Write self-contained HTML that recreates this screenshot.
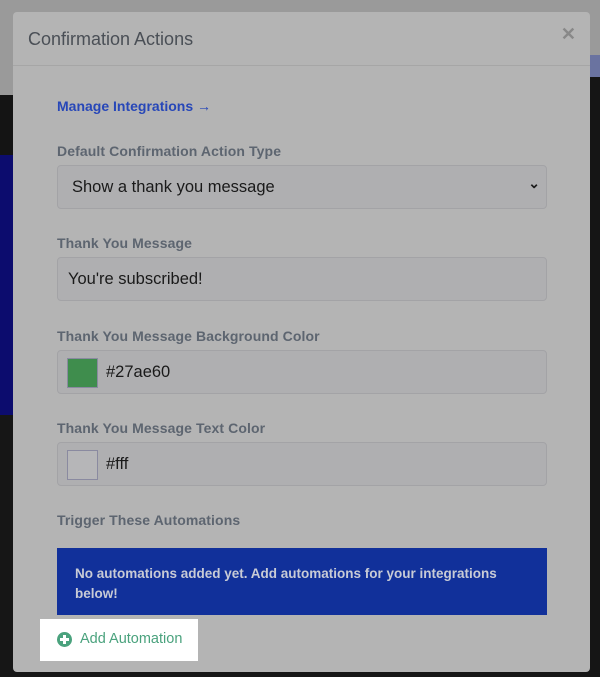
<!DOCTYPE html>
<html><head><style>
body{margin:0;width:600px;height:664px;overflow:hidden;position:relative;font-family:"Liberation Sans",sans-serif;background:#161616}
.bg{position:absolute}
.m{position:absolute;left:13px;top:12px;width:577px;height:660px;background:#b4b4b4;border-radius:4px}
.hd{position:absolute;left:0;top:0;right:0;height:53px;border-bottom:1px solid #a6a6a6}
.t{position:absolute;left:15px;top:17px;font-size:18px;color:#4a4f56}
.x{position:absolute;right:14px;top:12px;font-size:18px;color:#888;font-weight:bold}
.lbl{position:absolute;left:44px;font-size:14px;color:#5d6570;font-weight:bold;letter-spacing:0.1px}
.in{position:absolute;left:44px;width:490px;height:44px;background:#afafb1;border:1px solid #a3a3a6;border-radius:4px;box-sizing:border-box;font-size:16.5px;color:#1a1a1a}
.in span{position:absolute;top:12px}
.sw{position:absolute;left:9px;top:7px;width:31px;height:30px;box-sizing:border-box;border:1px solid #8a8aa0}
</style></head><body>
<div class="bg" style="left:0;top:0;width:600px;height:95px;background:#9a9a9a"></div>
<div class="bg" style="left:0;top:95px;width:14px;height:60px;background:#141414"></div>
<div class="bg" style="left:0;top:155px;width:14px;height:260px;background:#0c0c6e"></div>
<div class="bg" style="left:580px;top:55px;width:20px;height:22px;background:#6a73a0"></div>
<div class="bg" style="left:580px;top:77px;width:20px;height:600px;background:#151515"></div>
<div class="m">
<div class="hd"><div class="t">Confirmation Actions</div><div class="x">✕</div></div>
<div style="position:absolute;left:44px;top:86px;font-size:14px;color:#2747b8;font-weight:bold">Manage Integrations →</div>
<div class="lbl" style="top:131px">Default Confirmation Action Type</div>
<div class="in" style="top:153px"><span style="left:14px">Show a thank you message</span><span style="right:6px;top:9px;font-size:14px;font-weight:bold">⌄</span></div>
<div class="lbl" style="top:223px">Thank You Message</div>
<div class="in" style="top:245px"><span style="left:10px">You're subscribed!</span></div>
<div class="lbl" style="top:316px">Thank You Message Background Color</div>
<div class="in" style="top:338px"><div class="sw" style="background:#3f8d4d"></div><span style="left:48px">#27ae60</span></div>
<div class="lbl" style="top:408px">Thank You Message Text Color</div>
<div class="in" style="top:430px"><div class="sw" style="background:#b6b6b8"></div><span style="left:48px">#fff</span></div>
<div class="lbl" style="top:500px">Trigger These Automations</div>
<div style="position:absolute;left:44px;top:536px;width:490px;height:67px;background:#11309a;box-sizing:border-box;padding:16px 18px;color:#c8cbd6;font-size:13.5px;font-weight:bold;line-height:20px">No automations added yet. Add automations for your integrations below!</div>
</div>
<div style="position:absolute;left:40px;top:619px;width:158px;height:42px;background:#fff"></div>
<div style="position:absolute;left:57px;top:632px;width:15px;height:15px;border-radius:50%;background:#4aa27d"><div style="position:absolute;left:3px;top:6px;width:9px;height:3px;background:#fff"></div><div style="position:absolute;left:6px;top:3px;width:3px;height:9px;background:#fff"></div></div>
<div style="position:absolute;left:80px;top:631px;font-size:14.5px;color:#4aa27d">Add Automation</div>
</body></html>
